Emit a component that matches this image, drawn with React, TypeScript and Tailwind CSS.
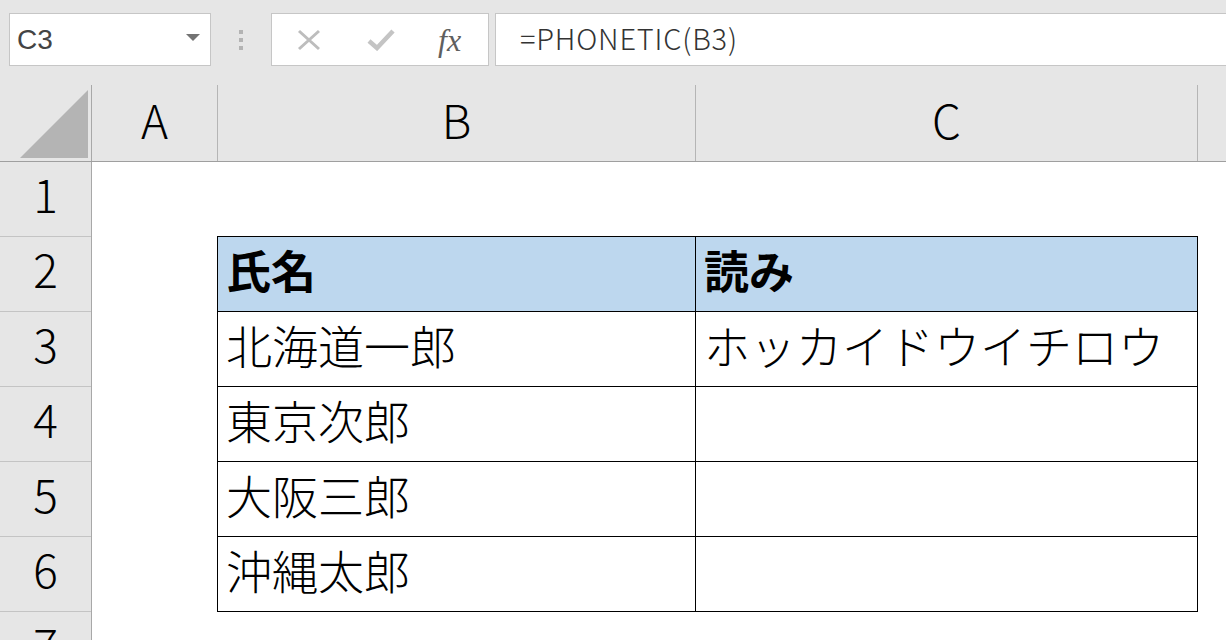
import React from "react";

const JP = '"Noto Sans CJK JP", "Noto Sans", sans-serif';

const rows = ["1", "2", "3", "4", "5", "6", "7"];

const data: [string, string][] = [
  ["北海道一郎", "ホッカイドウイチロウ"],
  ["東京次郎", ""],
  ["大阪三郎", ""],
  ["沖縄太郎", ""],
];

export default function App() {
  return (
    <div
      className="w-[1226px] h-[640px] overflow-hidden bg-[#e6e6e6] flex flex-col"
      style={{ fontFamily: JP }}
    >
      {/* Formula bar */}
      <div className="h-[85px] shrink-0 flex items-start pt-[13px] pl-[9px]">
        <div className="w-[202px] h-[53px] bg-white border border-[#c6c6c6] flex items-center justify-between pl-[7px] pr-[10px]">
          <span
            className="text-[28px] text-[#444] leading-none"
            style={{ fontFamily: '"Liberation Sans", Arial, sans-serif' }}
          >
            C3
          </span>
          <svg width="14" height="8" viewBox="0 0 14 8" className="mb-[4px]">
            <polygon points="0,0 14,0 7,7" fill="#737373" />
          </svg>
        </div>
        <div className="w-[60px] h-[53px] flex flex-col items-center justify-center gap-[4px]">
          <div className="w-[4px] h-[4px] bg-[#b3b3b3]" />
          <div className="w-[4px] h-[4px] bg-[#b3b3b3]" />
          <div className="w-[4px] h-[4px] bg-[#b3b3b3]" />
        </div>
        <div className="w-[218px] h-[53px] bg-white border border-[#c6c6c6] flex items-center pl-[25px]">
          <svg width="24" height="22" viewBox="0 0 24 22">
            <path d="M2 2 L22 20 M22 2 L2 20" stroke="#bdbdbd" strokeWidth="3" fill="none" />
          </svg>
          <svg width="28" height="22" viewBox="0 0 28 22" className="ml-[46px]">
            <path d="M2 12 L10 19 L26 2" stroke="#c4c4c4" strokeWidth="4.5" fill="none" strokeLinejoin="miter" />
          </svg>
          <span
            className="ml-[43px] text-[32px] italic text-[#5f5f5f] leading-none"
            style={{ fontFamily: '"Liberation Serif", "Times New Roman", serif' }}
          >
            fx
          </span>
        </div>
        <div className="ml-[6px] flex-1 h-[53px] bg-white border border-[#c6c6c6] border-r-0 flex items-center pl-[24px] pb-[4px]">
          <span className="text-[29px] font-light text-[#333] leading-none tracking-[0.8px]">
            =PHONETIC(B3)
          </span>
        </div>
      </div>

      {/* Column headers */}
      <div className="h-[77px] shrink-0 flex border-b border-[#9f9f9f]">
        <div className="w-[92px] shrink-0 border-r border-[#a8a8a8] flex items-start pl-[20px] pt-[5px]">
          <svg width="68" height="68" viewBox="0 0 68 68">
            <polygon points="68,0 68,68 0,68" fill="#b4b4b4" />
          </svg>
        </div>
        <div className="w-[126px] shrink-0 border-r border-[#b5b5b5] flex items-center justify-center pb-[8px] text-[46px] font-light text-black leading-none">
          A
        </div>
        <div className="w-[478px] shrink-0 border-r border-[#b5b5b5] flex items-center justify-center pb-[8px] text-[46px] font-light text-black leading-none">
          B
        </div>
        <div className="w-[502px] shrink-0 border-r border-[#b5b5b5] flex items-center justify-center pb-[8px] text-[46px] font-light text-black leading-none">
          C
        </div>
        <div className="flex-1" />
      </div>

      {/* Body */}
      <div className="flex flex-1">
        <div className="w-[92px] shrink-0 border-r border-[#a8a8a8] flex flex-col">
          {rows.map((n) => (
            <div
              key={n}
              className="h-[75px] shrink-0 border-b border-[#c4c4c4] flex items-center justify-center pb-[12px] text-[46px] font-light text-black leading-none"
            >
              {n}
            </div>
          ))}
        </div>
        <div className="flex-1 bg-white pl-[125px] pt-[74px]">
          <div className="inline-flex flex-col border-l border-t border-black">
            <div className="flex bg-[#bdd7ee]">
              <div className="w-[478px] h-[75px] border-r border-b border-black flex items-center pl-[8px] pb-[10px] text-[45px] font-bold text-black leading-none">
                氏名
              </div>
              <div className="w-[502px] h-[75px] border-r border-b border-black flex items-center pl-[8px] pb-[10px] text-[45px] font-bold text-black leading-none">
                読み
              </div>
            </div>
            {data.map(([a, b]) => (
              <div key={a} className="flex bg-white">
                <div className="w-[478px] h-[75px] border-r border-b border-black flex items-center pl-[8px] pb-[10px] text-[46px] font-light text-black leading-none">
                  {a}
                </div>
                <div className="w-[502px] h-[75px] border-r border-b border-black flex items-center pl-[8px] pb-[10px] text-[46px] font-light text-black leading-none">
                  {b}
                </div>
              </div>
            ))}
          </div>
        </div>
      </div>
    </div>
  );
}
